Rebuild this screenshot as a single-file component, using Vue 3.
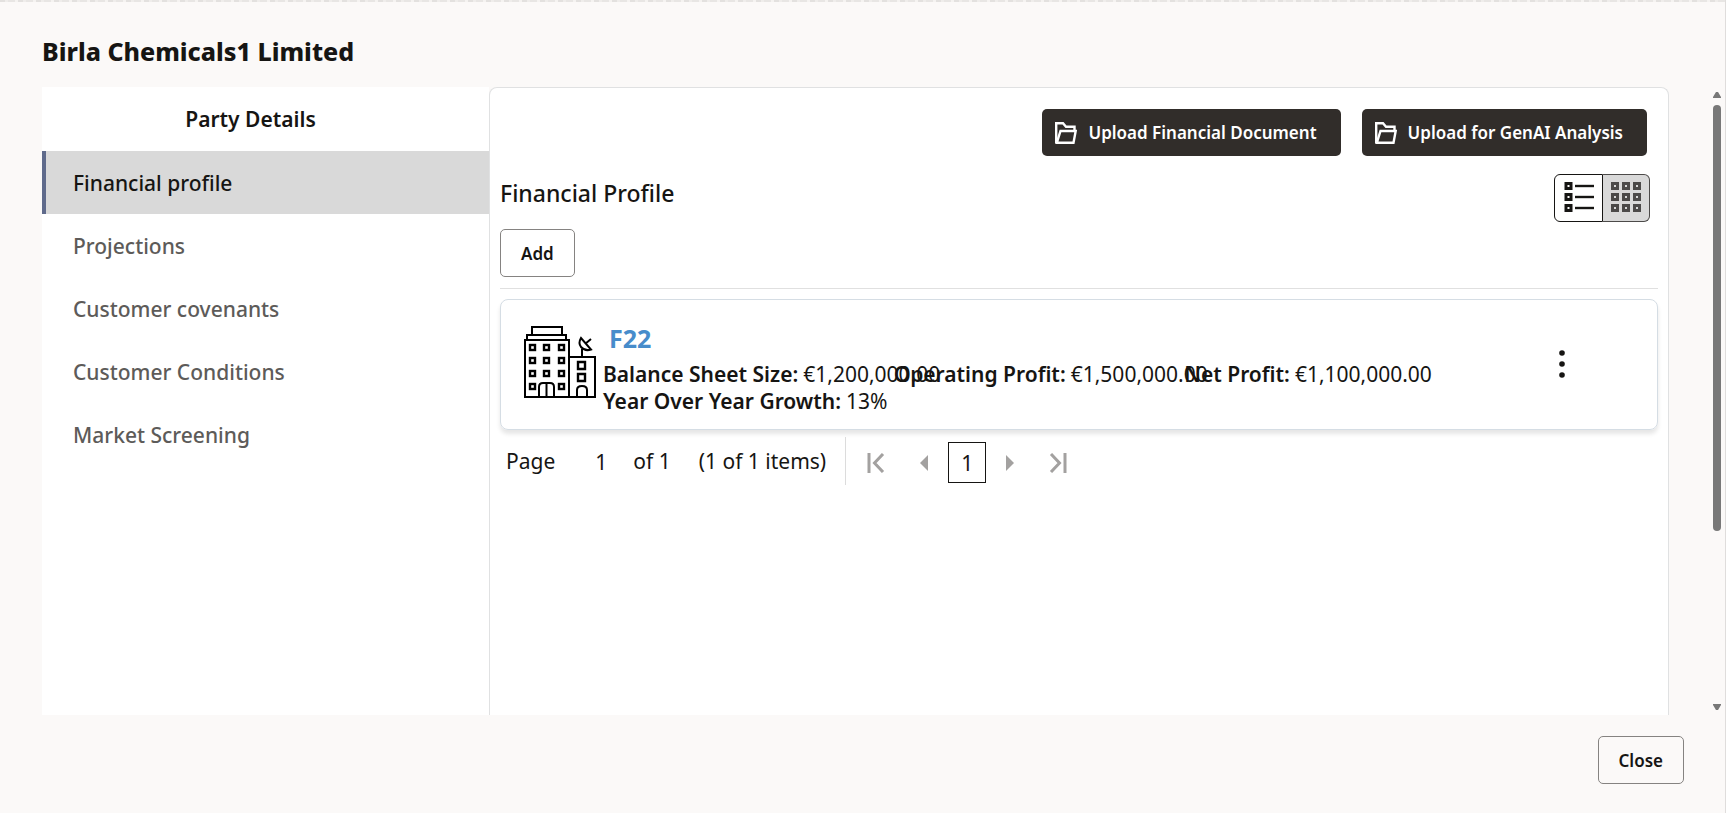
<script setup>
import { ref } from 'vue'

const sections = ['Financial profile', 'Projections', 'Customer covenants', 'Customer Conditions', 'Market Screening']
const active = ref(sections[0])
const view = ref('grid')
const page = ref('1')
const uploads = ['Upload Financial Document', 'Upload for GenAI Analysis']
const facts = [
  { label: 'Balance Sheet Size:', value: '€1,200,000.00' },
  { label: 'Operating Profit:', value: '€1,500,000.00' },
  { label: 'Net Profit:', value: '€1,100,000.00' },
  { label: 'Year Over Year Growth:', value: '13%' },
]
const cells = [1, 12, 23]
const windows = [
  [6, 19], [20, 19], [35, 19],
  [6, 32], [20, 32], [35, 32],
  [6, 45], [20, 45], [35, 45],
  [6, 58], [35, 58],
]
</script>

<template>
  <div class="dialog">
    <div class="strip"></div>
    <h1 class="title">Birla Chemicals1 Limited</h1>
    <div class="body">
      <nav class="side" aria-label="Party Details">
        <h2 class="side-title">Party Details</h2>
        <button
          v-for="s in sections"
          :key="s"
          type="button"
          class="side-item"
          :class="{ active: s === active }"
          @click="active = s"
        >{{ s }}</button>
      </nav>

      <main class="content">
        <div class="uploads">
          <button v-for="u in uploads" :key="u" type="button" class="upload">
            <svg width="22" height="22" viewBox="0 0 22 22" fill="none" stroke="#fff" stroke-width="2.400" aria-hidden="true">
              <path d="M1.200 21V1.200H8l3 3.500h8.500V9" />
              <path d="M1.800 20.800 5.500 9h15.200L18.500 20.800z" />
            </svg>
            <span>{{ u }}</span>
          </button>
        </div>

        <div class="heading">
          <h2 class="heading-text">Financial Profile</h2>
          <div class="toggle">
            <button type="button" class="list" aria-label="List view" @click="view = 'list'">
              <svg width="32" height="32" viewBox="0 0 32 32" fill="none" stroke="#161513" aria-hidden="true">
                <g v-for="y in cells" :key="y">
                  <rect x="3" :y="y + .5" width="5" height="5" stroke-width="3" />
                  <path :d="`M12 ${y + 3}h19`" stroke-width="2.400" />
                </g>
              </svg>
            </button>
            <button type="button" class="grid" aria-label="Grid view" @click="view = 'grid'">
              <svg width="32" height="32" viewBox="0 0 32 32" fill="none" stroke="#4c4a49" stroke-width="3" aria-hidden="true">
                <g v-for="y in cells" :key="y">
                  <rect v-for="x in cells" :key="x" :x="x + 1.5" :y="y + .5" width="5" height="5" />
                </g>
              </svg>
            </button>
          </div>
        </div>

        <div class="actions">
          <button type="button" class="outline">Add</button>
        </div>

        <article class="card">
          <svg class="building" width="72" height="72" viewBox="0 0 72 72" fill="none" stroke="#000" stroke-width="2" aria-hidden="true">
            <path d="M8 9V1h30v8M3 14V9h39v5M1 14h44v57H1zM45 31h26v40H45" />
            <rect v-for="w in windows" :key="w.join()" :x="w[0]" :y="w[1]" width="5" height="5" stroke-width="2.400" />
            <path d="M15 71V61q0-4 4-4h7q4 0 4 4v10M22.500 57v14M53 71v-7q0-4 5-4t5 4v7" />
            <path d="M54 36h7v7h-7zM54 48h7v7h-7z" stroke-width="2.400" />
            <path d="M58 31v-8M57 12q-3 5 0 9 4 4.500 10 2.500zM61 18l6-5" />
          </svg>
          <div class="card-main">
            <a href="#" class="card-link" @click.prevent>F22</a>
            <dl class="facts">
              <div v-for="f in facts" :key="f.label" class="fact">
                <dt>{{ f.label }}</dt>
                <dd>{{ f.value }}</dd>
              </div>
            </dl>
          </div>
          <button type="button" class="menu" aria-label="More actions">
            <svg width="6" height="28" viewBox="0 0 6 28" fill="#161513" aria-hidden="true">
              <circle cx="3" cy="3" r="2.800" /><circle cx="3" cy="14" r="2.800" /><circle cx="3" cy="25" r="2.800" />
            </svg>
          </button>
        </article>

        <div class="pager">
          <label for="page-number">Page</label>
          <input id="page-number" v-model="page" class="page-input" type="text" />
          <span class="of">of 1</span>
          <span class="count">(1 of 1 items)</span>
          <div class="pages">
            <button type="button" class="arrow" aria-label="First page">
              <svg width="18" height="20" viewBox="0 0 18 20" fill="none" stroke="#a3a1a0" stroke-width="3" aria-hidden="true"><path d="M2 0v20M16 1l-8.500 9 8.500 9" /></svg>
            </button>
            <button type="button" class="arrow" aria-label="Previous page">
              <svg width="8" height="16" viewBox="0 0 8 16" fill="#a3a1a0" aria-hidden="true"><path d="M8 0v16L0 8z" /></svg>
            </button>
            <button type="button" class="current">1</button>
            <button type="button" class="arrow" aria-label="Next page">
              <svg width="8" height="16" viewBox="0 0 8 16" fill="#a3a1a0" aria-hidden="true"><path d="M0 0v16l8-8z" /></svg>
            </button>
            <button type="button" class="arrow" aria-label="Last page">
              <svg width="18" height="20" viewBox="0 0 18 20" fill="none" stroke="#a3a1a0" stroke-width="3" aria-hidden="true"><path d="M16 0v20M2 1l8.500 9L2 19" /></svg>
            </button>
          </div>
        </div>
      </main>

      <div class="scrollbar" aria-hidden="true">
        <svg width="8" height="8" viewBox="0 0 8 8" fill="#787878"><path d="M3 1h2l3 5v1H0V6z" /></svg>
        <div class="track"><div class="thumb"></div></div>
        <svg width="8" height="8" viewBox="0 0 8 8" fill="#787878"><path d="M3 7h2l3-5V1H0v1z" /></svg>
      </div>
    </div>

    <footer class="footer">
      <button type="button" class="outline">Close</button>
    </footer>
  </div>
</template>

<style>
body {
  margin: 0;
  background: #fbf9f8;
}
</style>

<style scoped>
.dialog {
  box-sizing: border-box;
  display: flex;
  flex-direction: column;
  height: 100vh;
  border-right: 1px solid #dfdddc;
  background: #fbf9f8;
  color: #161513;
  font-family: "Noto Sans", "Open Sans", sans-serif;
  font-size: 21px;
  line-height: 28px;
}
button,
input {
  box-sizing: border-box;
  margin: 0;
  padding: 0;
  border: 0;
  background: none;
  color: inherit;
  font: inherit;
  cursor: pointer;
}
svg {
  display: block;
  flex: none;
}
.strip {
  height: 2px;
  background: repeating-linear-gradient(90deg, #e3e1df 0 5px, #efedeb 5px 8px, #e8e6e4 8px 15px, #f5f3f1 15px 18px);
}
.title {
  margin: 0;
  padding: 31px 42px 18px;
  font-size: 25px;
  line-height: 36px;
  font-weight: 800;
}
.body {
  display: flex;
  flex: 1;
  min-height: 0;
  padding-left: 42px;
}
.side {
  display: flex;
  flex-direction: column;
  flex: 0 0 447px;
  background: #fff;
}
.side-title {
  margin: 0;
  padding-right: 30px;
  font-size: 21px;
  line-height: 64px;
  font-weight: 600;
  text-align: center;
}
.side-item {
  height: 63px;
  padding-left: 27px;
  border-left: 4px solid transparent;
  color: #5d5b59;
  font-weight: 500;
  text-align: left;
}
.side-item.active {
  border-left-color: #5f6a8b;
  background: #d9d9d9;
  color: #161513;
}
.content {
  flex: 1;
  min-width: 0;
  padding: 21px 10px 0;
  border: 1px solid #e0e1e2;
  border-bottom: 0;
  border-radius: 8px 8px 0 0;
  background: #fff;
}
.uploads {
  display: flex;
  justify-content: flex-end;
  gap: 21px;
  padding-right: 11px;
}
.upload {
  display: flex;
  align-items: center;
  gap: 11px;
  height: 47px;
  padding: 0 24px 0 13px;
  border-radius: 5px;
  background: #312d2a;
  color: #fff;
  font-size: 17px;
  font-weight: 600;
}
.heading {
  display: flex;
  justify-content: space-between;
  padding: 18px 8px 7px 0;
}
.heading-text {
  margin: 0;
  font-size: 23px;
  line-height: 38px;
  font-weight: 500;
}
.toggle {
  display: flex;
}
.toggle button {
  display: flex;
  align-items: center;
  justify-content: center;
  height: 48px;
  border: 1px solid #161513;
}
.toggle .list {
  width: 49px;
  border-radius: 6px 0 0 6px;
}
.toggle .grid {
  width: 47px;
  border-color: #4c4a49;
  border-left: 0;
  border-radius: 0 6px 6px 0;
  background: #d9d9d9;
}
.actions {
  padding-bottom: 11px;
  border-bottom: 1px solid #e0e0e0;
}
.outline {
  display: block;
  height: 48px;
  padding: 1px 20px 0;
  border: 1px solid #858381;
  border-radius: 5px;
  font-size: 17px;
  font-weight: 600;
}
.card {
  display: flex;
  box-sizing: border-box;
  min-height: 131px;
  margin-top: 10px;
  padding: 21px 92px 12px 23px;
  border: 1px solid #d5dde4;
  border-radius: 8px;
  box-shadow: 0 4px 4px rgba(0, 0, 0, .1);
}
.building {
  margin-top: 5px;
}
.card-main {
  flex: 1;
  min-width: 0;
  padding-left: 7px;
}
.card-link {
  display: block;
  width: max-content;
  margin-left: 6px;
  color: #478ccb;
  font-size: 25px;
  line-height: 34px;
  font-weight: 700;
  text-decoration: none;
}
.facts {
  display: grid;
  grid-template-columns: repeat(3, minmax(0, 1fr));
  grid-auto-rows: 27px;
  margin: 5px 84px 0 0;
}
.fact {
  display: flex;
  gap: 5px;
  white-space: nowrap;
}
.fact dt {
  font-weight: 600;
}
.fact dd {
  margin: 0;
  font-weight: 400;
}
.menu {
  align-self: center;
  padding: 0 0 11px;
}
.pager {
  display: flex;
  align-items: center;
  height: 48px;
  margin-top: 7px;
  padding-left: 6px;
}
.page-input {
  width: 32px;
  margin-left: 20px;
  padding-top: 2px;
  text-align: right;
}
.pager .of {
  margin-left: 26px;
}
.pager .count {
  margin-left: 28px;
}
.pages {
  display: flex;
  align-items: center;
  box-sizing: border-box;
  height: 48px;
  margin-left: 19px;
  padding: 3px 0 0 21px;
  border-left: 1px solid #dcdcdc;
}
.arrow {
  padding: 4px 0;
}
.arrow:nth-child(2) {
  margin: 0 20px 0 35px;
}
.arrow:nth-child(4) {
  margin: 0 35px 0 20px;
}
.current {
  width: 38px;
  height: 41px;
  border: 1px solid #161513;
}
.scrollbar {
  display: flex;
  flex-direction: column;
  align-items: center;
  gap: 6px;
  width: 12px;
  margin-left: 42px;
  margin-right: 2px;
  padding: 4px 0;
}
.track {
  flex: 1;
}
.thumb {
  width: 8px;
  height: 72%;
  border-radius: 4px;
  background: #787878;
}
.footer {
  display: flex;
  justify-content: flex-end;
  padding: 21px 41px 29px;
}
</style>
